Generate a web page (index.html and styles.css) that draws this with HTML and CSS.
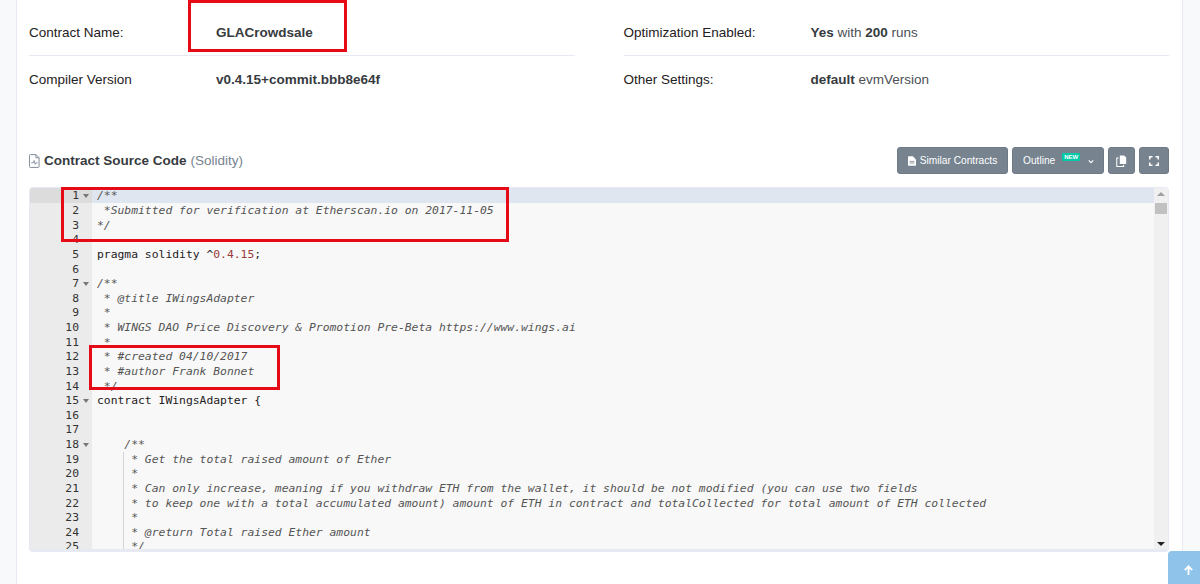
FILE: index.html
```html
<!DOCTYPE html>
<html lang="en">
<head>
<meta charset="utf-8">
<title>Contract Source Code</title>
<link rel="stylesheet" href="styles.css">
</head>
<body>
<main class="card">
  <section class="info">
    <div class="info-col">
      <div class="info-row ruled"><span class="label">Contract Name:</span><span class="value"><b>GLACrowdsale</b></span></div>
      <div class="info-row"><span class="label">Compiler Version</span><span class="value"><b>v0.4.15+commit.bbb8e64f</b></span></div>
    </div>
    <div class="info-col">
      <div class="info-row ruled"><span class="label">Optimization Enabled:</span><span class="value"><b>Yes</b> with <b>200</b> runs</span></div>
      <div class="info-row"><span class="label">Other Settings:</span><span class="value"><b>default</b> evmVersion</span></div>
    </div>
  </section>
  <section class="toolbar">
    <h2 class="title">
      <svg class="file-icon" viewBox="0 0 12 15" width="11" height="14"><path d="M1.500.5h6l3.500 3.500v9.500a1 1 0 0 1-1 1h-8.500a1 1 0 0 1-1-1v-12a1 1 0 0 1 1-1z M7.500.5v3.500h3.500" fill="none" stroke="#77838f" stroke-width="1"/><path d="M2.500 9.500h2l1-2.500 1.200 4 .8-1.500h2" fill="none" stroke="#77838f" stroke-width=".9"/></svg>
      <span>Contract Source Code</span> <em>(Solidity)</em>
    </h2>
    <div class="actions">
      <button class="btn similar"><svg viewBox="0 0 10 12" width="8" height="10"><path d="M0 1a1 1 0 0 1 1-1h5l4 4v7a1 1 0 0 1-1 1H1a1 1 0 0 1-1-1z" fill="#fff"/><path d="M2 6.500h6M2 8.500h6" stroke="#77838f"/></svg>Similar Contracts</button>
      <button class="btn outline">Outline<span class="new">NEW</span><svg class="chev" viewBox="0 0 8 6" width="6" height="5"><path d="M1 1.500l3 3 3-3" fill="none" stroke="#fff" stroke-width="1.500"/></svg></button>
      <button class="btn square"><svg viewBox="0 0 12 14" width="11" height="12"><path d="M4 .5h5l2.500 2.500v7.500h-7.500z" fill="#fff"/><path d="M2.500 3.500h-2v10h8v-2" fill="none" stroke="#fff" stroke-width="1.200"/></svg></button>
      <button class="btn square wide"><svg viewBox="0 0 10 10" width="10" height="10"><path d="M.75 3.500v-2.750h2.750M6.500.75h2.750v2.750M9.250 6.500v2.750h-2.750M3.500 9.250h-2.750v-2.750" fill="none" stroke="#fff" stroke-width="1.500"/></svg></button>
    </div>
  </section>
  <section class="editor">
    <div class="gutter">
      <div class="g active">1<i></i></div><div class="g">2</div><div class="g">3</div><div class="g">4</div><div class="g">5</div><div class="g">6</div><div class="g">7<i></i></div><div class="g">8</div><div class="g">9</div><div class="g">10</div><div class="g">11</div><div class="g">12</div><div class="g">13</div><div class="g">14</div><div class="g">15<i></i></div><div class="g">16</div><div class="g">17</div><div class="g">18<i></i></div><div class="g">19</div><div class="g">20</div><div class="g">21</div><div class="g">22</div><div class="g">23</div><div class="g">24</div><div class="g">25</div>
    </div>
    <div class="code">
<div class="l active c">/**</div>
<div class="l c"> *Submitted for verification at Etherscan.io on 2017-11-05</div>
<div class="l c">*/</div>
<div class="l"></div>
<div class="l">pragma solidity ^<span class="n">0.4.15</span>;</div>
<div class="l"></div>
<div class="l c">/**</div>
<div class="l c"> * @title IWingsAdapter</div>
<div class="l c"> * </div>
<div class="l c"> * WINGS DAO Price Discovery &amp; Promotion Pre-Beta https://www.wings.ai</div>
<div class="l c"> *</div>
<div class="l c"> * #created 04/10/2017</div>
<div class="l c"> * #author Frank Bonnet</div>
<div class="l c"> */</div>
<div class="l"><span class="k">contract</span> IWingsAdapter {</div>
<div class="l"></div>
<div class="l"></div>
<div class="l c">    /**</div>
<div class="l c guide">     * Get the total raised amount of Ether</div>
<div class="l c guide">     *</div>
<div class="l c guide">     * Can only increase, meaning if you withdraw ETH from the wallet, it should be not modified (you can use two fields</div>
<div class="l c guide">     * to keep one with a total accumulated amount) amount of ETH in contract and totalCollected for total amount of ETH collected</div>
<div class="l c guide">     *</div>
<div class="l c guide">     * @return Total raised Ether amount</div>
<div class="l c guide">     */</div>
    </div>
    <div class="scrollbar"><span class="up"></span><span class="thumb"></span><span class="down"></span></div>
  </section>
  <div class="mark mark-name"></div>
  <div class="mark mark-head"></div>
  <div class="mark mark-author"></div>
</main>
<a class="to-top" href="#"><svg viewBox="0 0 12 12" width="11" height="11"><path d="M6 11V2M2 5.500L6 1.500l4 4" fill="none" stroke="#fff" stroke-width="2"/></svg></a>
</body>
</html>
```
FILE: styles.css
```css
* { box-sizing: border-box; }
html, body { margin: 0; height: 584px; overflow: hidden; }
body { background: #f8f9fa; font-family: "Liberation Sans", Arial, sans-serif; color: #1e2022; position: relative; }
.card { position: relative; margin: 0 17px 0 16px; height: 584px; background: #fff; border: solid #e7eaf3; border-width: 0 1px; padding: 0 13px 0 12px; }
.info { display: flex; gap: 49px; padding-top: 10px; }
.info-col { flex: 1; }
.info-row { display: flex; align-items: center; height: 46px; font-size: 13.5px; color: #1e2022; }
.ruled { border-bottom: 1px solid #e7eaf3; }
.label { width: 187px; }
.value { color: #4a4f55; }
.value b { color: #373b40; }
.toolbar { display: flex; justify-content: space-between; align-items: center; margin-top: 45px; height: 27px; }
.title { margin: 0; font-size: 13.5px; font-weight: 700; display: flex; align-items: center; gap: 4px; color: #373b40; }
.title em { font-style: normal; font-weight: 400; color: #77838f; }
.actions { display: flex; gap: 4px; }
.btn { height: 27px; display: flex; align-items: center; justify-content: center; gap: 4px; padding: 0; background: #77838f; color: #fff; border: 1px solid #6e7a86; border-radius: 3px; font: 10.2px "Liberation Sans", Arial, sans-serif; }
.similar { width: 111px; }
.outline { width: 92px; padding: 0 10px; position: relative; justify-content: flex-start; gap: 0; }
.new { background: #00c9a7; color: #fff; font-size: 6px; font-weight: 700; line-height: 8px; width: 18px; text-align: center; border-radius: 1px; margin: -8px 0 0 7px; }
.chev { position: absolute; right: 9px; top: 11px; }
.square { width: 27px; padding: 0; }
.wide { width: 30px; }
.editor { margin-top: 13px; height: 365px; display: flex; position: relative; overflow: hidden; background: #f8f8f8; border: solid #e7eaf3; border-width: 1px 1px 3px; border-radius: 4px; font: 11.37px/14.63px "DejaVu Sans Mono", monospace; color: #1e2022; }
.gutter { width: 62px; flex: none; background: #ebebeb; padding-top: .4px; }
.g { height: 14.63px; text-align: right; padding-right: 13px; position: relative; color: #333; }
.g.active { background: #dcdcdc; }
.g i { position: absolute; right: 3px; top: 6px; border: 3px solid transparent; border-top: 4px solid #777; border-bottom: 0; }
.code { flex: 1; padding: .4px 0 0 5px; min-width: 0; }
.l { height: 14.63px; white-space: pre; }
.l.active { background: #e0e6f0; margin-left: -5px; padding-left: 5px; }
.c { font-style: italic; color: #555; }
.n { color: #9a3a3a; }
.k { color: #1e2022; }
.guide { background: linear-gradient(#d4d4d4, #d4d4d4) 26px 0 / 1px 100% no-repeat; }
.scrollbar { width: 14px; flex: none; background: #f0f0f0; position: relative; z-index: 1; }
.up, .down { position: absolute; left: 3px; border: 4px solid transparent; }
.up { top: 4px; border-bottom: 4px solid #a0a0a0; border-top: 0; }
.down { bottom: 3px; border-top: 4px solid #222; border-bottom: 0; }
.thumb { position: absolute; top: 15px; left: 1px; width: 12px; height: 11px; background: #c1c1c1; }
.mark { position: absolute; border: 3px solid #e60a17; pointer-events: none; }
.mark-name { left: 171px; top: 0; width: 159px; height: 52px; }
.mark-head { left: 44px; top: 187px; width: 448px; height: 55px; }
.mark-author { left: 72px; top: 345px; width: 191px; height: 45px; }
.to-top { position: absolute; right: 0; bottom: 0; width: 32px; height: 33px; background: #8fc3ea; border-radius: 4px 0 0 0; display: flex; align-items: center; justify-content: center; padding-left: 8px; padding-top: 6px; }
```
